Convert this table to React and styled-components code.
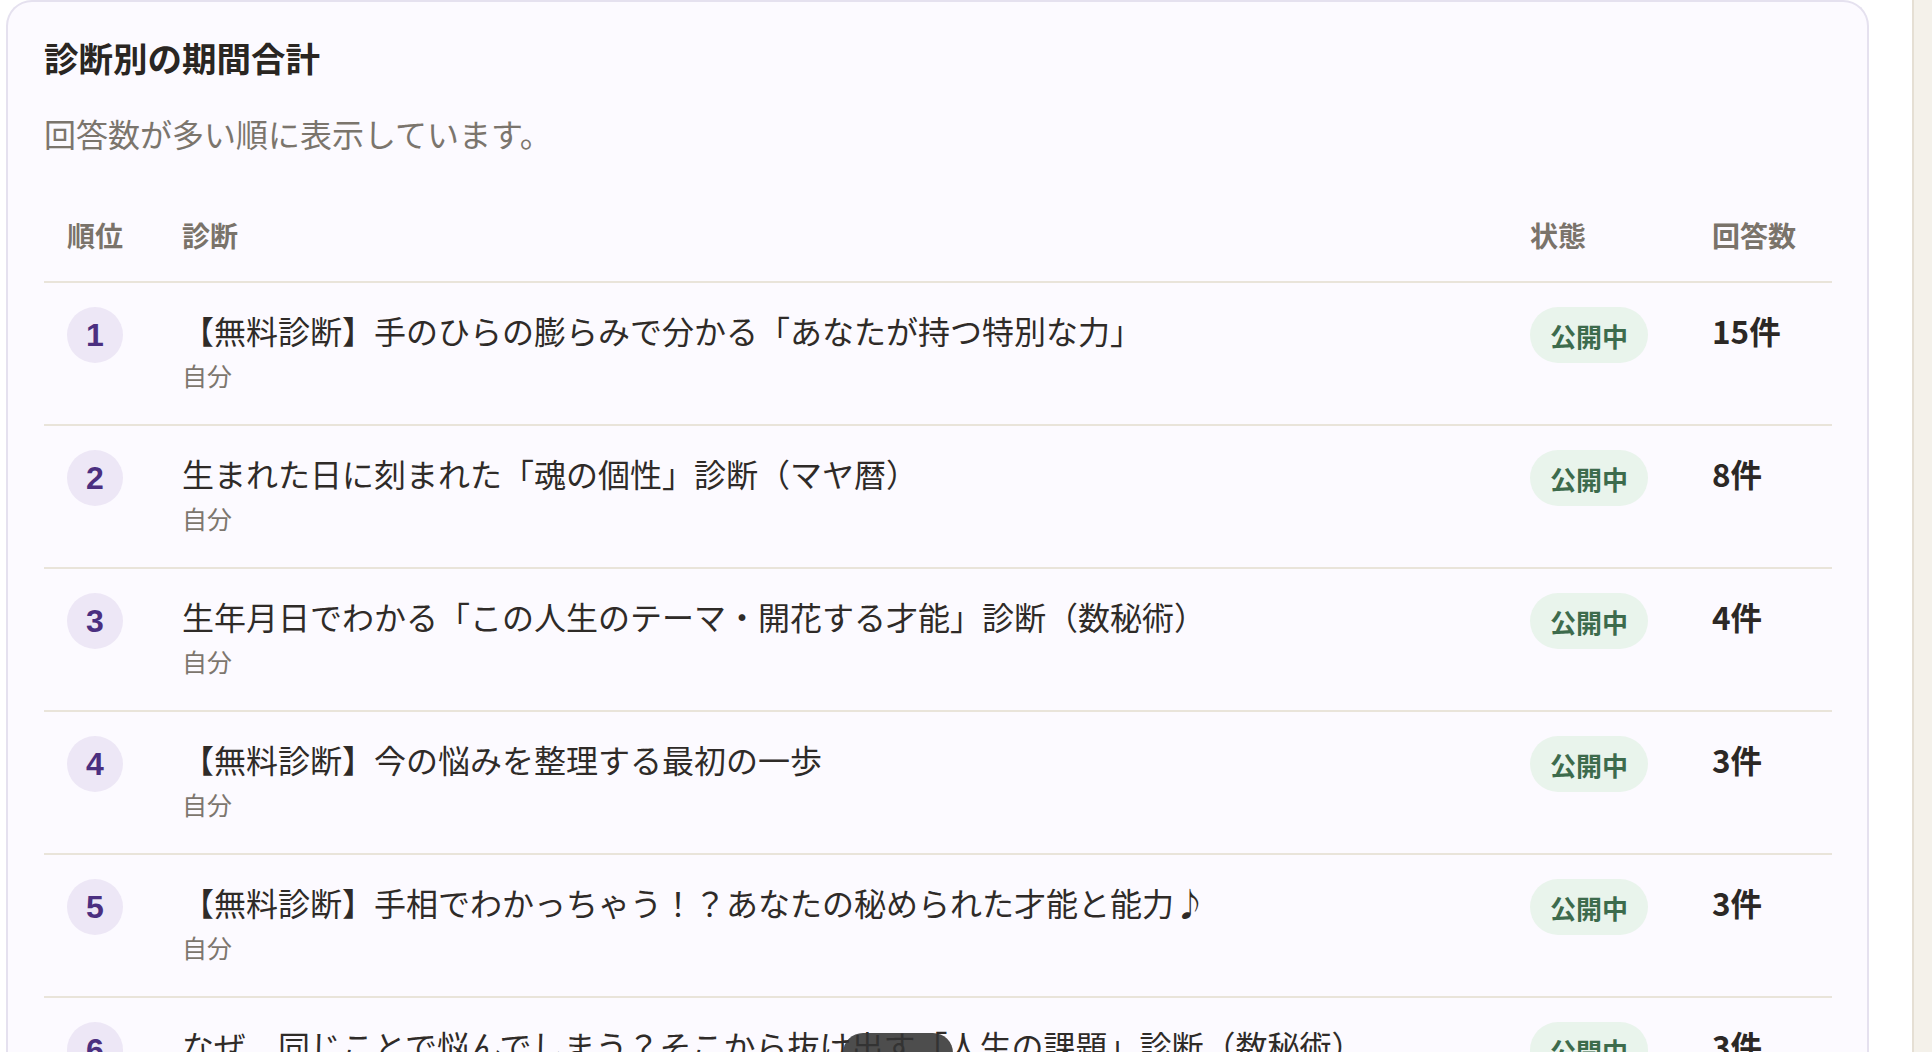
import React from "react";
import styled, { createGlobalStyle } from "styled-components";

const GlobalStyle = createGlobalStyle`
  html, body {
    margin: 0;
    padding: 0;
    height: 100%;
    overflow: hidden;
    background: #ffffff;
  }
  body {
    font-family: "Noto Sans CJK JP", "Noto Sans", sans-serif;
    color: #2e2a26;
  }
  #root { height: 100%; }
`;

const Page = styled.div`
  display: flex;
  height: 100vh;
  overflow: hidden;
`;

const Main = styled.main`
  flex: 1;
  min-width: 0;
  padding: 0 43px 0 6px;
`;

const SideStrip = styled.aside`
  width: 18px;
  border-left: 2px solid #e5dfd4;
  background: #f4f1ea;
`;

const Card = styled.section`
  background: #fcfaff;
  border: 2px solid #e5e1ef;
  border-bottom: none;
  border-radius: 26px 26px 0 0;
  padding: 31px 35px 0 36px;
`;

const Title = styled.h2`
  margin: 0;
  font-size: 34.5px;
  line-height: 1.4;
  font-weight: 700;
  color: #2a2622;
`;

const Subtitle = styled.p`
  margin: 28px 0 0;
  font-size: 32px;
  line-height: 1.5;
  font-weight: 400;
  color: #7b756d;
`;

const Table = styled.div`
  margin-top: 57px;
`;

const Row = styled.div`
  display: grid;
  grid-template-columns: 115px 1fr 182px 143px;
  align-items: start;
  border-bottom: 2px solid #e9e4da;
  padding: ${(p) => (p.$head ? "0 0 25px" : "24px 0 27px")};
`;

const Cell = styled.div`
  padding-left: 23px;
  min-width: 0;
`;

const HeadCell = styled(Cell)`
  font-size: 28px;
  line-height: 1.5;
  font-weight: 700;
  color: #7a736a;
`;

const Rank = styled.div`
  width: 56px;
  height: 56px;
  border-radius: 50%;
  background: #ede7f6;
  color: #4b2f80;
  font-family: "Liberation Sans", "Noto Sans", sans-serif;
  font-size: 32px;
  font-weight: 700;
  display: flex;
  align-items: center;
  justify-content: center;
`;

const QuizTitle = styled.div`
  font-size: 32px;
  line-height: 46px;
  color: #2f2b28;
  white-space: nowrap;
`;

const Owner = styled.div`
  font-size: 25px;
  line-height: 44px;
  color: #7d766e;
`;

const Badge = styled.span`
  display: inline-flex;
  align-items: center;
  justify-content: center;
  width: 118px;
  height: 56px;
  border-radius: 28px;
  background: #e9f4ec;
  color: #3d6b4c;
  font-size: 26px;
  font-weight: 700;
`;

const Count = styled.div`
  font-size: 31.5px;
  line-height: 46px;
  font-weight: 700;
  color: #2c2825;
`;

const Toast = styled.div`
  position: fixed;
  left: 843px;
  top: 1033px;
  width: 110px;
  height: 40px;
  border-radius: 20px;
  background: rgba(52, 52, 52, 0.88);
`;

const rows = [
  { title: "【無料診断】手のひらの膨らみで分かる「あなたが持つ特別な力」", count: 15 },
  { title: "生まれた日に刻まれた「魂の個性」診断（マヤ暦）", count: 8 },
  { title: "生年月日でわかる「この人生のテーマ・開花する才能」診断（数秘術）", count: 4 },
  { title: "【無料診断】今の悩みを整理する最初の一歩", count: 3 },
  { title: "【無料診断】手相でわかっちゃう！？あなたの秘められた才能と能力♪", count: 3 },
  { title: "なぜ、同じことで悩んでしまう？そこから抜け出す「人生の課題」診断（数秘術）", count: 3 },
];

export default function App() {
  return (
    <>
      <GlobalStyle />
      <Page>
        <Main>
          <Card>
            <Title>診断別の期間合計</Title>
            <Subtitle>回答数が多い順に表示しています。</Subtitle>
            <Table>
              <Row $head>
                <HeadCell>順位</HeadCell>
                <HeadCell>診断</HeadCell>
                <HeadCell>状態</HeadCell>
                <HeadCell>回答数</HeadCell>
              </Row>
              {rows.map((r, i) => (
                <Row key={i}>
                  <Cell>
                    <Rank>{i + 1}</Rank>
                  </Cell>
                  <Cell>
                    <QuizTitle>{r.title}</QuizTitle>
                    <Owner>自分</Owner>
                  </Cell>
                  <Cell>
                    <Badge>公開中</Badge>
                  </Cell>
                  <Cell>
                    <Count>{r.count}件</Count>
                  </Cell>
                </Row>
              ))}
            </Table>
          </Card>
        </Main>
        <SideStrip />
      </Page>
      <Toast />
    </>
  );
}
